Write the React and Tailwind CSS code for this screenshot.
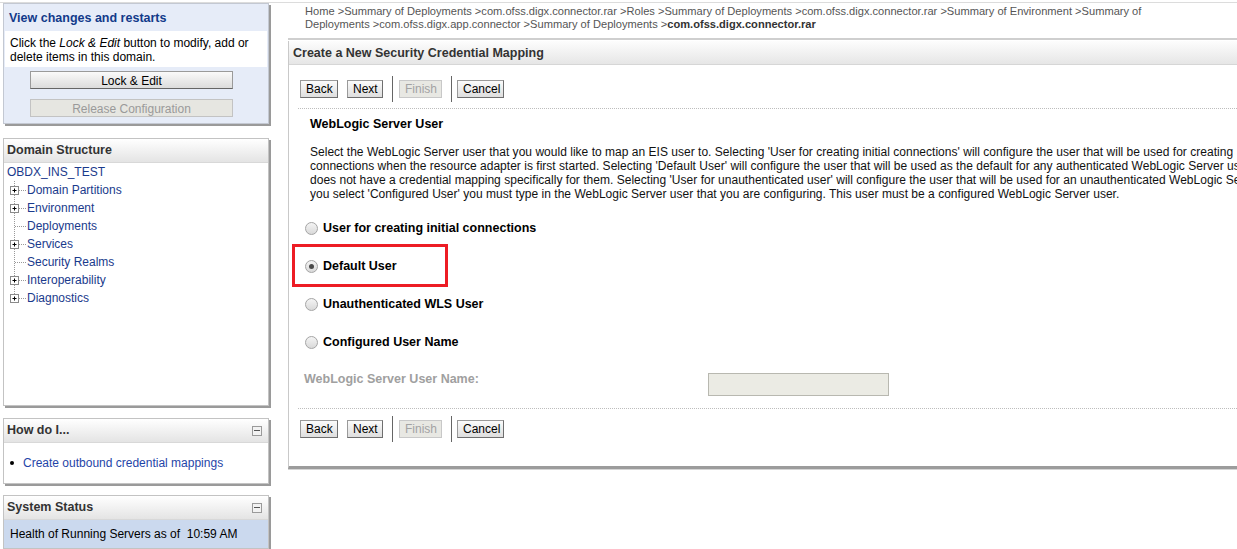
const font = "font-['Liberation_Sans',Arial,sans-serif]";

function Btn({ children, disabled, className = "" }) {
  return (
    <button
      className={
        "h-[18px] px-[5px] text-[12px] leading-[16px] border " +
        (disabled
          ? "bg-[#e8e8e3] text-[#a3a3a3] border-[#c8c8c8]"
          : "bg-gradient-to-b from-[#fbfbfb] to-[#dedede] text-black border-[#9a9a9a] border-b-[#6e6e6e] border-r-[#6e6e6e]") +
        " " +
        className
      }
    >
      {children}
    </button>
  );
}

function ButtonBar() {
  return (
    <div className="flex items-center h-[26px]">
      <Btn className="w-[38px]">Back</Btn>
      <Btn className="w-[36px] ml-[9px]">Next</Btn>
      <div className="w-px h-[26px] bg-[#666] ml-[9px]" />
      <Btn disabled className="w-[43px] ml-[6px]">Finish</Btn>
      <div className="w-px h-[26px] bg-[#666] ml-[9px]" />
      <Btn className="w-[47px] ml-[5px]">Cancel</Btn>
    </div>
  );
}

function Radio({ checked }) {
  return (
    <span className="relative inline-block w-[13px] h-[13px] rounded-full border border-[#a5a5a5] bg-gradient-to-b from-[#f4f4f4] to-[#d9d9d9]">
      {checked && (
        <span className="absolute left-[3px] top-[3px] w-[5px] h-[5px] rounded-full bg-[#4a4a4a]" />
      )}
    </span>
  );
}

function TreeRow({ label, plus, last, root }) {
  if (root) {
    return (
      <div className="h-[18px] flex items-center pl-[3px] text-[#1a3a8c]">{label}</div>
    );
  }
  return (
    <div className="h-[18px] flex items-center">
      <svg width="23" height="18" className="shrink-0">
        <line x1="10.5" y1="0" x2="10.5" y2={last ? 9 : 18} stroke="#999" strokeDasharray="1 1" />
        <line x1="11" y1="9.5" x2="23" y2="9.5" stroke="#999" strokeDasharray="1 1" />
        {plus && (
          <g>
            <rect x="6.5" y="5.5" width="8" height="8" fill="#fff" stroke="#8a8a8a" />
            <line x1="8.5" y1="9.5" x2="12.5" y2="9.5" stroke="#000" />
            <line x1="10.5" y1="7.5" x2="10.5" y2="11.5" stroke="#000" />
          </g>
        )}
      </svg>
      <span className="text-[#1a3a8c]">{label}</span>
    </div>
  );
}

function BoxHeader({ title, minus }) {
  return (
    <div className="h-[24px] flex items-center justify-between px-[3px] bg-gradient-to-b from-[#ffffff] to-[#e4e4e4] border-b border-[#d8d8d8]">
      <span className="font-bold text-[#333] text-[12.5px]">{title}</span>
      {minus && (
        <span className="w-[10px] h-[10px] border border-[#9a9a9a] bg-[#f2f2f2] flex items-center justify-center mr-[3px]">
          <span className="w-[6px] h-px bg-[#555]" />
        </span>
      )}
    </div>
  );
}

export default function App() {
  const tree = [
    { label: "Domain Partitions", plus: true },
    { label: "Environment", plus: true },
    { label: "Deployments" },
    { label: "Services", plus: true },
    { label: "Security Realms" },
    { label: "Interoperability", plus: true },
    { label: "Diagnostics", plus: true, last: true },
  ];

  return (
    <div className={`w-[1237px] h-[549px] overflow-hidden bg-white text-[12px] ${font} border-t border-[#dcdcdc] mt-[2px] flex`}>
      {/* Left column */}
      <div className="w-[288px] shrink-0 pl-[3px] flex flex-col">
        <div className="w-[266px] bg-[#e6ecf8] border border-[#c3c8d2] shadow-[2px_2px_0_#9a9a9a]">
          <div className="h-[27px] flex items-center px-[5px] pt-[2px] font-bold text-[12.5px] text-[#123a8a]">
            View changes and restarts
          </div>
          <div className="bg-white mx-px px-[5px] pt-[5px] pb-[3px] leading-[14px] text-black">
            Click the <i>Lock &amp; Edit</i> button to modify, add or delete items in this domain.
          </div>
          <div className="flex flex-col items-start gap-[10px] pl-[26px] pt-[4px] pb-[6px]">
            <button className="w-[203px] h-[18px] text-[12px] bg-gradient-to-b from-[#fafafa] to-[#dcdcdc] border border-[#9a9a9a] border-b-[#666] text-black">
              Lock &amp; Edit
            </button>
            <button className="w-[203px] h-[18px] text-[12px] bg-[#e6e6e1] border border-[#c3c3c3] text-[#9a9a9a]">
              Release Configuration
            </button>
          </div>
        </div>

        <div className="w-[266px] h-[268px] mt-[14px] bg-white border border-[#c3c3c3] shadow-[2px_2px_0_#9a9a9a]">
          <BoxHeader title="Domain Structure" />
          <div>
            <TreeRow root label="OBDX_INS_TEST" />
            {tree.map((t) => (
              <TreeRow key={t.label} {...t} />
            ))}
          </div>
        </div>

        <div className="w-[266px] mt-[12px] bg-white border border-[#c3c3c3] shadow-[2px_2px_0_#9a9a9a]">
          <BoxHeader title="How do I..." minus />
          <div className="h-[40px] flex items-center pl-[6px]">
            <span className="w-[4px] h-[4px] rounded-full bg-black mr-[9px]" />
            <span className="text-[#1f45a8]">Create outbound credential mappings</span>
          </div>
        </div>

        <div className="w-[266px] mt-[11px] bg-white border border-[#c3c3c3] shadow-[2px_2px_0_#9a9a9a]">
          <BoxHeader title="System Status" minus />
          <div className="h-[28px] flex items-center pl-[6px] bg-[#cbd9ee] text-black">
            Health of Running Servers as of&nbsp;&nbsp;10:59 AM
          </div>
        </div>
      </div>

      {/* Main */}
      <div className="flex-1 min-w-0 flex flex-col">
        <div className="h-[37px] pl-[17px] pt-[2px] text-[11.1px] leading-[13px] text-[#555] border-b-2 border-[#cfcfcf]">
          <div className="whitespace-nowrap">
            Home &gt;Summary of Deployments &gt;com.ofss.digx.connector.rar &gt;Roles &gt;Summary of Deployments &gt;com.ofss.digx.connector.rar &gt;Summary of Environment &gt;Summary of
          </div>
          <div className="whitespace-nowrap">
            Deployments &gt;com.ofss.digx.app.connector &gt;Summary of Deployments &gt;<b className="text-[#333]">com.ofss.digx.connector.rar</b>
          </div>
        </div>

        <div className="relative mt-[1px] h-[428px] border-l border-[#c9c9c9] border-b-[3px] border-b-[#9c9c9c] shadow-[0_1px_0_#d5d5d5]">
          <div className="h-[24px] flex items-center pl-[4px] pt-[1px] bg-gradient-to-b from-[#fdfdfd] to-[#e6e6e6] border-b border-[#d6d6d6]">
            <span className="font-bold text-[12.5px] text-[#333]">Create a New Security Credential Mapping</span>
          </div>

          <div className="pl-[11px] pt-[11px]">
            <ButtonBar />
          </div>

          <div className="ml-[9px] mt-[6px] border-t border-dotted border-[#bdbdbd]" />

          <div className="pl-[21px] pt-[7px] whitespace-nowrap overflow-hidden">
            <div className="font-bold text-[12.5px] text-black leading-[16px]">WebLogic Server User</div>
            <div className="mt-[13px] leading-[14px] text-[#111] tracking-[0.02px]">
              <div>Select the WebLogic Server user that you would like to map an EIS user to. Selecting 'User for creating initial connections' will configure the user that will be used for creating</div>
              <div>connections when the resource adapter is first started. Selecting 'Default User' will configure the user that will be used as the default for any authenticated WebLogic Server user that</div>
              <div>does not have a credential mapping specifically for them. Selecting 'User for unauthenticated user' will configure the user that will be used for an unauthenticated WebLogic Server user. If</div>
              <div>you select 'Configured User' you must type in the WebLogic Server user that you are configuring. This user must be a configured WebLogic Server user.</div>
            </div>
          </div>

          <div className="pl-[16px] pt-[19px] flex flex-col gap-[22px] font-bold text-[12.5px] text-black">
            {[
              ["User for creating initial connections", false],
              ["Default User", true],
              ["Unauthenticated WLS User", false],
              ["Configured User Name", false],
            ].map(([l, c]) => (
              <label key={l} className="h-[16px] flex items-center gap-[5px]">
                <Radio checked={c} />
                {l}
              </label>
            ))}
          </div>

          <div className="pl-[15px] pt-[15px] flex items-start">
            <span className="w-[404px] font-bold text-[12.5px] text-[#a0a0a0] pt-[5px]">WebLogic Server User Name:</span>
            <span className="w-[181px] h-[23px] bg-[#ebebe4] border border-[#b8b8b0] mt-[8px]" />
          </div>

          <div className="ml-[9px] mt-[12px] border-t border-dotted border-[#bdbdbd]" />

          <div className="pl-[11px] pt-[7px]">
            <ButtonBar />
          </div>

          {/* annotation highlight */}
          <div className="absolute left-[3px] top-[203px] w-[156px] h-[43px] border-[3px] border-[#ed1c24]" />
        </div>
      </div>
    </div>
  );
}
